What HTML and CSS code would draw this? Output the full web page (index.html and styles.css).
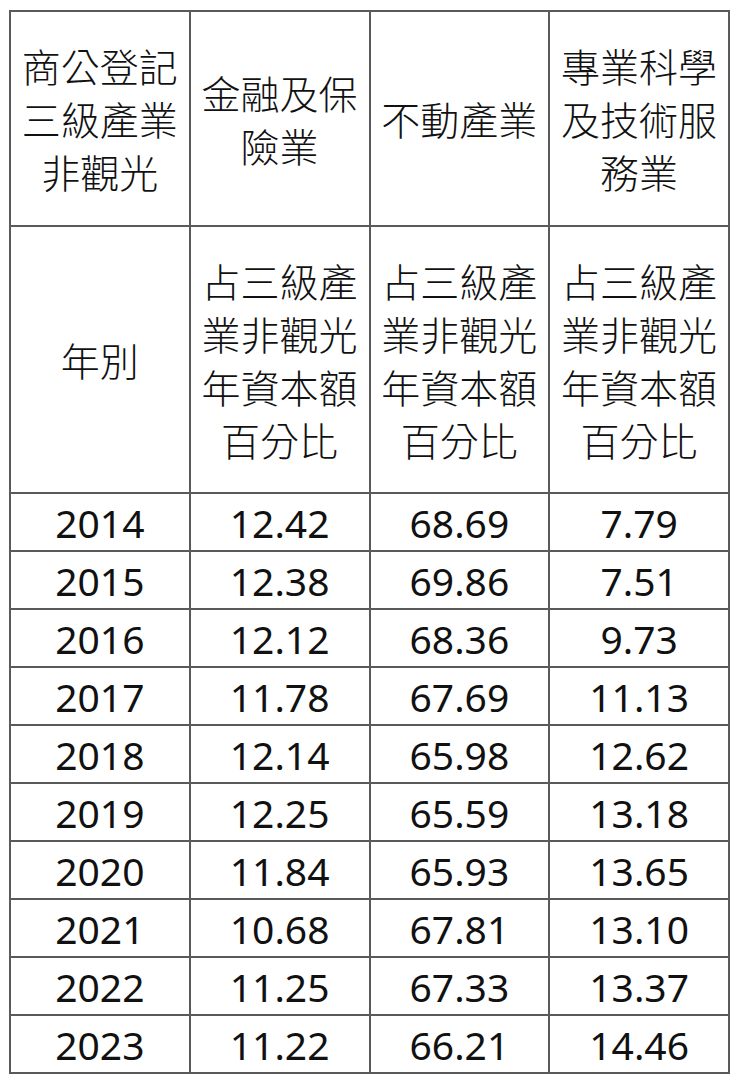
FILE: index.html
```html
<!DOCTYPE html>
<html lang="zh-Hant">
<head>
<meta charset="utf-8">
<link rel="stylesheet" href="styles.css">
</head>
<body>
<div class="wrap">
<table class="data">
<colgroup><col class="c"><col class="c"><col class="c"><col class="c"></colgroup>
<thead>
<tr class="h1"><th>商公登記三級產業非觀光</th><th>金融及保險業</th><th>不動產業</th><th>專業科學及技術服務業</th></tr>
<tr class="h2"><th>年別</th><th>占三級產業非觀光年資本額百分比</th><th>占三級產業非觀光年資本額百分比</th><th>占三級產業非觀光年資本額百分比</th></tr>
</thead>
<tbody>
<tr><td>2014</td><td>12.42</td><td>68.69</td><td>7.79</td></tr>
<tr><td>2015</td><td>12.38</td><td>69.86</td><td>7.51</td></tr>
<tr><td>2016</td><td>12.12</td><td>68.36</td><td>9.73</td></tr>
<tr><td>2017</td><td>11.78</td><td>67.69</td><td>11.13</td></tr>
<tr><td>2018</td><td>12.14</td><td>65.98</td><td>12.62</td></tr>
<tr><td>2019</td><td>12.25</td><td>65.59</td><td>13.18</td></tr>
<tr><td>2020</td><td>11.84</td><td>65.93</td><td>13.65</td></tr>
<tr><td>2021</td><td>10.68</td><td>67.81</td><td>13.10</td></tr>
<tr><td>2022</td><td>11.25</td><td>67.33</td><td>13.37</td></tr>
<tr><td>2023</td><td>11.22</td><td>66.21</td><td>14.46</td></tr>
</tbody>
</table>
</div>
</body>
</html>
```
FILE: styles.css
```css
html, body {
  margin: 0;
  padding: 0;
  background: #fff;
}
.wrap {
  padding: 10px 0 0 9px;
}
.data {
  border-collapse: collapse;
  table-layout: fixed;
  width: 721px;
  font-family: "Noto Sans", "Noto Sans CJK TC", sans-serif;
  font-size: 39px;
  color: #111;
}
.data .c {
  width: 25%;
}
.data th, .data td {
  border: 2px solid #5a5a5a;
  text-align: center;
  vertical-align: middle;
  padding: 0 3px;
  line-height: 53px;
}
.data th {
  font-family: "Noto Sans CJK TC", sans-serif;
  font-weight: 300;
}
.data td {
  font-weight: 400;
  height: 58px;
  box-sizing: border-box;
}
.h1 th {
  height: 215px;
  box-sizing: border-box;
}
.h2 th {
  height: 267px;
  box-sizing: border-box;
}
```
